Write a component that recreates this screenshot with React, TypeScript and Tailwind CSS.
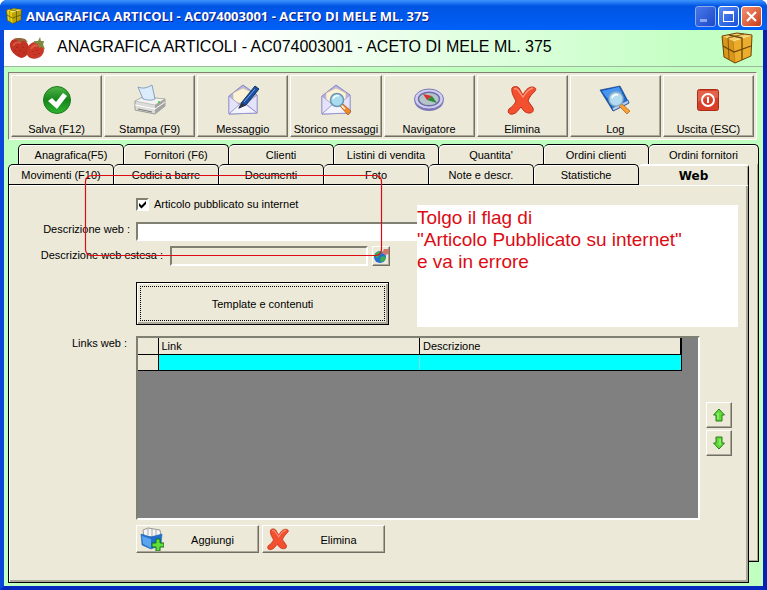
import type { ReactNode } from "react";

const raised =
  "border border-t-white border-l-white border-r-[#716f64] border-b-[#716f64] shadow-[inset_-1px_-1px_0_#aca899]";
const sunken =
  "border-2 border-t-[#808072] border-l-[#808072] border-r-white border-b-white";

function CheckIcon() {
  return (
    <svg width="32" height="32" viewBox="0 0 32 32">
      <defs>
        <linearGradient id="ok" x1="0" y1="0" x2="0" y2="1">
          <stop offset="0" stopColor="#4fb54a" />
          <stop offset="0.5" stopColor="#16861a" />
          <stop offset="1" stopColor="#2fb52f" />
        </linearGradient>
      </defs>
      <circle cx="16" cy="16" r="13.5" fill="url(#ok)" stroke="#1d7a1d" />
      <path d="M7 17l4-3 4 4 7-9 4 3-10 13z" fill="#fff" />
    </svg>
  );
}

function PrinterIcon() {
  return (
    <svg width="32" height="32" viewBox="0 0 32 32">
      <path d="M1 17l8-4 22 2v7L21 30 1 26z" fill="#dcdcd8" stroke="#8a8a86" strokeWidth=".8" />
      <path d="M1 17l8-4 22 2-10 6z" fill="#f4f4f1" stroke="#aaa" strokeWidth=".6" />
      <path d="M21 21v9l10-8v-7z" fill="#a4a5a0" />
      <path d="M9 15L4 3c5 2 9 1 14-2l3 14c-4 2-8 1-12 0z" fill="#dcecfb" stroke="#6b8fb8" strokeWidth=".8" />
      <path d="M1 21l20 4 10-7" fill="none" stroke="#fff" />
      <path d="M4 25l14 3" stroke="#777" />
      <circle cx="25" cy="18" r="1" fill="#3c3" />
    </svg>
  );
}

function Envelope() {
  return (
    <>
      <path d="M2 12L16 1l14 10v18L2 30z" fill="#b9b6e6" stroke="#8683c4" />
      <path d="M6 9l10-5 10 5v10H6z" fill="#fdf2d8" stroke="#c8b890" strokeWidth=".6" />
      <path d="M2 12l11 9L2 30zM30 11l-11 9 11 9z" fill="#e4e3fa" stroke="#8f8ccb" strokeWidth=".7" />
      <path d="M2 30l12-11 3 0 13 10z" fill="#f4f4ff" stroke="#8f8ccb" strokeWidth=".8" />
    </>
  );
}

function MessageIcon() {
  return (
    <svg width="32" height="32" viewBox="0 0 32 32">
      <Envelope />
      <path d="M12 24l3-6L28 2l4 3-13 16z" fill="#1c4fa0" stroke="#123468" />
      <path d="M17 18L28 5" stroke="#77a8e8" />
      <path d="M11 25l4-6 3 2z" fill="#333" />
    </svg>
  );
}

function HistoryIcon() {
  return (
    <svg width="32" height="32" viewBox="0 0 32 32">
      <Envelope />
      <path d="M20 22l3-2 8 7-3 4z" fill="#f08a28" stroke="#a85010" strokeWidth=".7" />
      <path d="M21 21l4 4" stroke="#ffe" strokeWidth="1.5" />
      <circle cx="17" cy="16" r="6.5" fill="#a8dcee" stroke="#6a98b4" strokeWidth="1.5" />
      <path d="M13 15c1-3 4-4 6-3" stroke="#fff" strokeWidth="1.5" fill="none" />
    </svg>
  );
}

function CompassIcon() {
  return (
    <svg width="32" height="32" viewBox="0 0 32 32">
      <ellipse cx="16" cy="17" rx="14.5" ry="10" fill="#7a77b8" />
      <ellipse cx="16" cy="15" rx="14.5" ry="10" fill="#cfcdf0" stroke="#7c79b6" />
      <ellipse cx="16" cy="15" rx="10.5" ry="6.8" fill="#b4c4c8" stroke="#6f6ca8" strokeWidth="1.4" />
      <path d="M10 10l9 2-5 4z" fill="#d83030" />
      <path d="M24 19l-10-3 5-4z" fill="#2c8a3c" />
    </svg>
  );
}

function CrossIcon({ size }: { size: number }) {
  return (
    <svg width={size} height={size} viewBox="0 0 32 32">
      <path
        d="M6 4c2-2 5-2 7 0l4 7c2-4 5-8 9-8 3 0 5 2 3 4-3 3-6 6-7 10l5 7c1 4-1 5-4 5-4 0-6-3-8-6-3 3-4 6-8 7-4 1-6-2-4-5 3-2 6-5 7-8-2-4-5-8-4-13z"
        fill="#f2502f"
        stroke="#c02c16"
      />
      <path d="M8 5c2-1 3 0 4 1l5 7c3-5 6-8 10-9" fill="none" stroke="#ff9478" strokeWidth="1.4" />
    </svg>
  );
}

function LogIcon() {
  return (
    <svg width="32" height="32" viewBox="0 0 32 32">
      <path d="M1 6l20-4 9 17-16 8z" fill="#1559b8" stroke="#0b3a80" strokeWidth=".6" />
      <path d="M14 27l16-8-1-3-16 7z" fill="#b8ccf0" stroke="#0b3a80" strokeWidth=".6" />
      <path d="M3 7l17-4 8 14-14 7z" fill="#2470d0" />
      <path d="M3 7l17-4 3 6-15 5z" fill="#4a96ee" />
      <path d="M20 22l3-2 8 7-3 3z" fill="#f5a038" stroke="#b06010" strokeWidth=".7" />
      <circle cx="17" cy="15" r="7" fill="#b4dcf0" stroke="#8ab0c8" strokeWidth="1.5" />
      <path d="M13 14c1-3 4-4 6-3" stroke="#fff" strokeWidth="1.6" fill="none" />
    </svg>
  );
}

function PowerIcon() {
  return (
    <svg width="32" height="32" viewBox="0 0 32 32">
      <rect x="5.500" y="5.500" width="21" height="21" rx="2" fill="#d8402a" stroke="#b02a18" />
      <path d="M6 7h20v7c-8-2-14 0-20 4z" fill="#ec7860" opacity=".6" />
      <circle cx="16" cy="16" r="6" fill="none" stroke="#fff" strokeWidth="2" />
      <path d="M16 13v6" stroke="#fff" strokeWidth="2" />
    </svg>
  );
}

function StrawberryIcon() {
  return (
    <svg width="38" height="24" viewBox="0 0 38 24">
      <path d="M1 9c0-5 4-7 9-6 6 0 10 4 10 10 0 5-4 9-8 9C6 20 1 15 1 9z" fill="#c23222" />
      <path d="M19 11c3-5 10-7 14-3 3 4 2 9-1 12-4 3-9 3-12 1-3-3-3-7-1-10z" fill="#cc3826" stroke="#a8281a" strokeWidth=".5" />
      <path d="M4 10c1-3 5-5 8-3M22 13c2-4 5-4 7-3" stroke="#e4705a" strokeWidth="2" fill="none" opacity=".6" />
      <path d="M8 11v1M6 14v1M11 14v1M14 11v1M10 18v1M15 16v1M24 15v1M28 14v1M26 18v1M30 17v1" stroke="#8f1a10" />
      <path d="M4 3l4-1 4 0 4 1 3 3-5-1-3 1-3-2z" fill="#94663c" />
      <path d="M25 5l4 0 2-4 1 4 3 0-1 4 2 4-4-2-2 1-1-4-4-1z" fill="#7f8a40" />
    </svg>
  );
}

function BoxIcon({ bright, size }: { bright?: boolean; size: number }) {
  const [top, left, right] = bright
    ? ["#fff04a", "#e8d410", "#b8a40a"]
    : ["#f4cf6c", "#d9961c", "#ecac2c"];
  const edge = bright ? "#4c4402" : "#6b4606";
  return (
    <svg width={size} height={size} viewBox="0 0 32 32">
      <path d="M1 4l15-3 15 2-1 21-16 7L3 25z" fill={right} />
      <path d="M1 4l15-3 15 2-19 6z" fill={top} />
      <path d="M1 4l11 5 2 22-11-6z" fill={left} />
      <path d="M12 9l19-6" stroke="#fbe6a0" />
      <path d="M12 9l2 22" stroke="#b8780e" strokeWidth=".7" />
      <path d="M8 3l13 3v22M2 14l11 6 17-6" fill="none" stroke={edge} strokeWidth="1.300" />
      <path d="M23 2L7 6l1 21" fill="none" stroke={edge} strokeWidth=".8" />
      <path d="M1 4l15-3 15 2-1 21-16 7L3 25z" fill="none" stroke={edge} />
    </svg>
  );
}

function GlobeIcon() {
  return (
    <svg width="16" height="16" viewBox="0 0 16 16">
      <circle cx="7" cy="9" r="6" fill="#2470d0" />
      <path d="M2 6c2-3 5-3 7-2-1 3-4 3-4 6-2 0-3-2-3-4zM8 9c3-1 4 0 5 1-1 3-3 4-5 4-1-2-1-3 0-5z" fill="#3fae4a" />
      <path d="M9 5l2-4h5v5l-4 1z" fill="#d07868" />
    </svg>
  );
}

function AddBoxIcon() {
  return (
    <svg width="24" height="24" viewBox="0 0 24 24">
      <path d="M3 3l5-2 12 2 1 6-17 1z" fill="#f6f6f6" stroke="#999" />
      <path d="M8 2v6M12 2v7M16 3v6" stroke="#aaa" />
      <path d="M1 7l10 3 11-3-1 11-10 4-9-4z" fill="#1f6fd0" stroke="#2a66b0" strokeWidth=".6" />
      <path d="M2 9l9 3v9l-8-4z" fill="#5ba5ee" />
      <path d="M16 12h4v4h4v4h-4v4h-4v-4h-4v-4h4z" fill="#5fe03c" stroke="#14701a" />
    </svg>
  );
}

function ArrowIcon({ down }: { down?: boolean }) {
  return (
    <svg width="14" height="14" viewBox="0 0 14 14" className={down ? "rotate-180" : ""}>
      <path d="M7 1l5.500 6H10v6H4V7H1.500z" fill="#5edb35" stroke="#2a7d1c" />
      <path d="M6 5v6" stroke="#b8f6a0" />
    </svg>
  );
}

const tools: { label: string; icon: ReactNode }[] = [
  { label: "Salva (F12)", icon: <CheckIcon /> },
  { label: "Stampa (F9)", icon: <PrinterIcon /> },
  { label: "Messaggio", icon: <MessageIcon /> },
  { label: "Storico messaggi", icon: <HistoryIcon /> },
  { label: "Navigatore", icon: <CompassIcon /> },
  { label: "Elimina", icon: <CrossIcon size={32} /> },
  { label: "Log", icon: <LogIcon /> },
  { label: "Uscita (ESC)", icon: <PowerIcon /> },
];

const backTabs = [
  "Anagrafica(F5)",
  "Fornitori (F6)",
  "Clienti",
  "Listini di vendita",
  "Quantita'",
  "Ordini clienti",
  "Ordini fornitori",
];
const frontTabs = [
  "Movimenti (F10)",
  "Codici a barre",
  "Documenti",
  "Foto",
  "Note e descr.",
  "Statistiche",
];

function Tab({ label, last }: { label: string; last?: boolean }) {
  return (
    <button
      role="tab"
      aria-selected={false}
      className={
        "h-full rounded-t-[5px] border-t border-r border-black bg-[#ece9d8] pt-px text-center whitespace-nowrap shadow-[inset_1px_1px_0_#fff] first:border-l " +
        (last ? "w-[110px] shrink-0" : "min-w-0 flex-1")
      }
    >
      {label}
    </button>
  );
}

export default function App() {
  const title = "ANAGRAFICA ARTICOLI - AC074003001 - ACETO DI MELE ML. 375";
  return (
    <div className="flex min-h-screen flex-col overflow-hidden rounded-t-[7px] bg-[#0a3fd0] font-['Liberation_Sans',Arial,sans-serif] text-[11px] leading-[14px] text-black">
      <header className="flex h-[30px] items-center bg-linear-to-b from-[#3d95ff] via-[#0054e3] via-20% to-[#0060f8] pt-[2px] pr-[5px] pl-[6px]">
        <BoxIcon bright size={16} />
        <h1 className="ml-1 flex-1 font-['Open_Sans','Noto_Sans',sans-serif] text-[13px] font-bold whitespace-nowrap text-white [text-shadow:1px_1px_0_#0a1883]">
          {title}
        </h1>
        <div className="flex gap-[2px]">
          <button aria-label="Riduci" className="flex size-[21px] items-end rounded-[3px] border border-[#8fa8ec] bg-linear-to-br from-[#4a78ea] to-[#1c48c8] pb-1 pl-1">
            <span className="h-[3px] w-[7px] bg-[#8aa4f0]" />
          </button>
          <button aria-label="Ingrandisci" className="flex size-[21px] items-center justify-center rounded-[3px] border border-white bg-linear-to-br from-[#5a8cf4] to-[#1a4fd8]">
            <span className="size-[11px] border border-t-[3px] border-white" />
          </button>
          <button aria-label="Chiudi" className="flex size-[21px] items-center justify-center rounded-[3px] border border-white bg-linear-to-br from-[#f09070] to-[#cc3a14]">
            <svg width="13" height="13" viewBox="0 0 13 13">
              <path d="M2 2l9 9M11 2l-9 9" stroke="#fff" strokeWidth="2.200" />
            </svg>
          </button>
        </div>
      </header>

      <main className="flex flex-1 flex-col border-x-4 border-b-4 border-l-[#0a48dc] border-r-[#0620b4] border-b-[#0628bc] bg-[#c0ffc0]">
        <div className="flex h-[37px] items-center border-b border-[#a0b8a0] bg-linear-to-r from-white from-30% to-[#c4ffc4] to-90% pr-[10px] pl-[5px]">
          <StrawberryIcon />
          <h2 className="ml-[10px] flex-1 pb-[2px] font-['Liberation_Sans',Arial,sans-serif] text-[16px] leading-5 whitespace-nowrap">
            {title}
          </h2>
          <BoxIcon size={32} />
        </div>

        <div
          role="toolbar"
          className="mt-[5px] mr-[6px] ml-[4px] flex gap-[2px] border border-t-[#808072] border-r-white border-b-white border-l-[#808072] bg-[#ece9d8] p-[2px]"
        >
          {tools.map((t) => (
            <button key={t.label} className={"flex h-[62px] min-w-0 flex-1 flex-col items-center bg-[#ece9d8] pt-2 whitespace-nowrap " + raised}>
              {t.icon}
              <span className="mt-[6px]">{t.label}</span>
            </button>
          ))}
        </div>

        <div className="mx-[4px] mt-[4px] mb-[3px] flex flex-1 flex-col">
          <div role="tablist" className="ml-[10px] flex h-5">
            {backTabs.map((t, i) => (
              <Tab key={t} label={t} last={i === backTabs.length - 1} />
            ))}
          </div>
          <div className="flex flex-1">
            <div className="flex min-w-0 flex-1 flex-col">
              <div role="tablist" className="flex h-5 rounded-tl-[5px] bg-[#ece9d8]">
                {frontTabs.map((t) => (
                  <Tab key={t} label={t} />
                ))}
                <button
                  role="tab"
                  aria-selected={true}
                  className="z-10 -mb-px w-[110px] shrink-0 rounded-t-[4px] border-t-2 border-r border-t-white border-r-black bg-[#ece9d8] text-center font-['DejaVu_Sans',sans-serif] text-[12px] font-bold shadow-[inset_-1px_0_0_#aca899]"
                >
                  Web
                </button>
              </div>

              <section className="relative flex flex-1 flex-col border border-black bg-[#ece9d8] pt-[12px] pr-[16px] pb-[29px] pl-[5px] shadow-[inset_1px_1px_0_#fff,inset_-2px_-2px_0_#aca899]">
                <div className="ml-[122px] flex">
                  <label className="flex items-center gap-[5px]">
                    <span className="grid">
                      <input type="checkbox" defaultChecked className={"size-[13px] appearance-none bg-white [grid-area:1/1] " + sunken} />
                      <svg width="13" height="13" viewBox="0 0 13 13" className="pointer-events-none [grid-area:1/1]">
                        <path d="M3 5v3l2.500 2.500L10 6V3L5.500 7.500z" fill="#000" />
                      </svg>
                    </span>
                    Articolo pubblicato su internet
                  </label>
                </div>

                <div className="mt-[11px] flex">
                  <label htmlFor="web" className="w-[116px] text-right">
                    Descrizione web :
                  </label>
                  <input id="web" className={"mr-[32px] ml-[6px] h-[19px] min-w-0 flex-1 bg-white px-1 " + sunken} />
                </div>

                <div className="mt-[5px] flex">
                  <label htmlFor="webext" className="w-[149px] pt-[2px] text-right">
                    Descrizione web estesa :
                  </label>
                  <input id="webext" readOnly className={"ml-[7px] h-5 w-[198px] bg-[#ece9d8] px-1 " + sunken} />
                  <button aria-label="Apri nel browser" className={"ml-[4px] flex h-5 w-[18px] items-center justify-center " + raised}>
                    <GlobeIcon />
                  </button>
                </div>

                <button className="mt-[16px] ml-[122px] flex h-[43px] w-[253px] border border-black bg-[#ece9d8] p-[3px] shadow-[inset_1px_1px_0_#fff,inset_-2px_-2px_0_#aca899]">
                  <span className="flex size-full items-center justify-center border border-dotted border-black">
                    Template e contenuti
                  </span>
                </button>

                <div className="mt-[11px] flex flex-1">
                  <span id="links" className="w-[113px] text-right">
                    Links web :
                  </span>
                  <div className={"ml-[9px] min-w-0 flex-1 bg-[#808080] pr-[16px] " + sunken}>
                    <table aria-labelledby="links" className="w-full table-fixed border-collapse">
                      <thead>
                        <tr className="h-4 bg-[#ece9d8] text-left">
                          <th className="w-5 border-r border-b border-black p-0" />
                          <th className="border-r border-b border-black px-[3px] py-0 font-normal">Link</th>
                          <th className="border-r-2 border-b border-black px-[3px] py-0 font-normal">Descrizione</th>
                        </tr>
                      </thead>
                      <tbody>
                        <tr className="h-4 bg-[#00ffff]">
                          <td className="border-r border-b border-black bg-[#ece9d8] p-0" />
                          <td className="border-r border-b border-r-[#80e0e0] border-b-black p-0" />
                          <td className="border-r border-b border-black p-0" />
                        </tr>
                      </tbody>
                    </table>
                  </div>
                  <div className="ml-[6px] flex w-[26px] flex-col gap-[2px] pt-[66px]">
                    <button aria-label="Sposta su" className={"flex h-[26px] items-center justify-center " + raised}>
                      <ArrowIcon />
                    </button>
                    <button aria-label="Sposta giu" className={"flex h-[26px] items-center justify-center " + raised}>
                      <ArrowIcon down />
                    </button>
                  </div>
                </div>

                <div className="mt-[5px] ml-[122px] flex gap-[3px]">
                  <button className={"flex h-7 w-[123px] items-center px-[3px] " + raised}>
                    <AddBoxIcon />
                    <span className="flex-1 pt-[2px] pl-[6px] text-center">Aggiungi</span>
                  </button>
                  <button className={"flex h-7 w-[123px] items-center px-[3px] " + raised}>
                    <CrossIcon size={24} />
                    <span className="flex-1 pt-[2px] pl-[6px] text-center">Elimina</span>
                  </button>
                </div>

                <svg className="pointer-events-none absolute -top-[10px] left-[76px] z-20 h-[82px] w-[298px] overflow-visible text-[#dc0c14]" viewBox="0 0 298 82">
                  <rect x="0.5" y="0.5" width="296" height="80" rx="6" fill="none" stroke="currentColor" strokeWidth="1.2" />
                </svg>
                <p className="absolute top-[20px] left-[408px] z-20 h-[122px] w-[321px] bg-white pt-[2px] font-['Liberation_Sans',Arial,sans-serif] text-[19px] leading-[22px] whitespace-nowrap text-[#dc0c14]">
                  Tolgo il flag di
                  <br />
                  "Articolo Pubblicato su internet"
                  <br />e va in errore
                </p>
              </section>
            </div>
            <div className="mb-[21px] w-[10px] border-r border-b border-black bg-[#ece9d8] shadow-[inset_-1px_-1px_0_#aca899]" />
          </div>
        </div>
      </main>
    </div>
  );
}
